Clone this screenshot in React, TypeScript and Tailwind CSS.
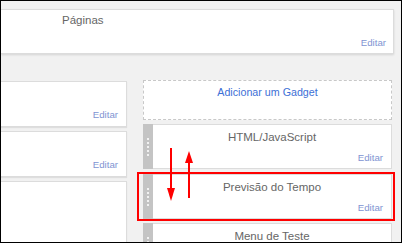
import React from "react";

const Editar = ({ className = "" }: { className?: string }) => (
  <div className={`text-right text-[9.7px] leading-[12px] text-[#8194d2] ${className}`}>Editar</div>
);

const Handle = () => (
  <div className="w-[10px] shrink-0 bg-[#c4c4c4] flex flex-col items-center pt-[14px] gap-[2px]">
    {[0, 1, 2, 3, 4].map((i) => (
      <div key={i} className="w-[2px] h-[2px] bg-[#f2f2f2]" />
    ))}
  </div>
);

const Gadget = ({
  title,
  className = "",
  editar = true,
}: {
  title: string;
  className?: string;
  editar?: boolean;
}) => (
  <div className={`flex h-[45px] shrink-0 ${className}`}>
    <Handle />
    <div className="flex-1 flex flex-col justify-between bg-white border border-l-0 border-[#dcdcdc] pt-[5px] pb-[4px] pr-[8px]">
      <div className="text-center pl-[8px] text-[11.5px] leading-[14px] text-[#666]">{title}</div>
      {editar && <Editar />}
    </div>
  </div>
);

const LeftCard = ({ h = "h-[46px]", editar = true }: { h?: string; editar?: boolean }) => (
  <div
    className={`${h} shrink-0 bg-white border border-l-0 border-[#dcdcdc] shadow-[0_1px_1px_rgba(0,0,0,0.08)] flex flex-col justify-end pb-[5px] pr-[8px]`}
  >
    {editar && <Editar />}
  </div>
);

export default function App() {
  return (
    <div className="relative w-[402px] h-[243px] overflow-hidden border border-black bg-[#f1f1f1] font-['Liberation_Sans',Arial,sans-serif]">
      {/* top card */}
      <div className="mt-[8px] mr-[7px] h-[45px] bg-white border border-l-0 border-[#dcdcdc] shadow-[0_1px_2px_rgba(0,0,0,0.12)] flex flex-col justify-between pt-[3px] pb-[4px] pr-[7px]">
        <div className="pl-[61px] text-[11.5px] leading-[14px] text-[#666]">Páginas</div>
        <Editar />
      </div>

      <div className="flex mt-[26px]">
        {/* left column */}
        <div className="w-[126px] mt-[1px] flex flex-col gap-[4px]">
          <LeftCard />
          <LeftCard />
          <LeftCard h="h-[70px]" editar={false} />
        </div>

        {/* right column */}
        <div className="ml-[16px] w-[249px] flex flex-col">
          <div className="h-[40px] bg-white border border-dashed border-[#c8c8c8] pt-[5px] text-center text-[10.7px] leading-[13px] text-[#3d6fd6]">
            Adicionar um Gadget
          </div>
          <Gadget title="HTML/JavaScript" className="mt-[4px]" />
          <Gadget title="Previsão do Tempo" className="mt-[5px]" />
          <Gadget title="Menu de Teste" className="mt-[4px]" editar={false} />
        </div>
      </div>

      {/* highlight */}
      <div className="absolute left-[136px] top-[171px] w-[258px] h-[49px] border-2 border-[#ff0000]" />
      <svg className="absolute left-[-1px] top-[-1px]" width="402" height="243" viewBox="0 0 402 243">
        <line x1="171" y1="148" x2="171" y2="190" stroke="#ff0000" strokeWidth="2" />
        <polygon points="167,188 175,188 171,201" fill="#ff0000" />
        <line x1="189" y1="161" x2="189" y2="198" stroke="#ff0000" strokeWidth="2" />
        <polygon points="185,163 193,163 189,151" fill="#ff0000" />
      </svg>
    </div>
  );
}
